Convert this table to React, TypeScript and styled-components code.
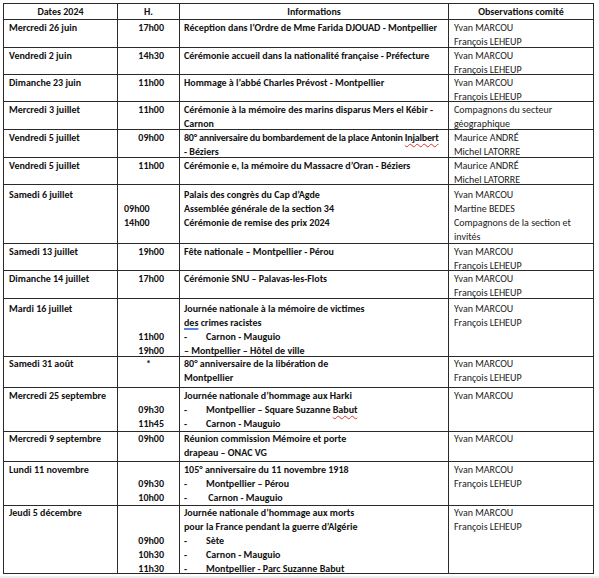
import React from "react";
import styled, { createGlobalStyle } from "styled-components";

type Line = string | React.ReactNode;

interface Entry {
  date: string;
  times: string[];
  timeAlign?: "right" | "left" | "center";
  info: Line[];
  obs: string[];
  height: number;
  padTop?: number;
}

const YM_FL = ["Yvan MARCOU", "François LEHEUP"];

const GlobalStyle = createGlobalStyle`
  html, body {
    margin: 0;
    padding: 0;
    background: #efefef;
  }
  body {
    font-family: Carlito, "Lato", "Liberation Sans", sans-serif;
    color: #111;
  }
`;

const Spell = styled.span`
  text-decoration: underline wavy #e0342c;
  text-decoration-thickness: 1px;
  text-underline-offset: 2px;
`;

const Grammar = styled.span`
  text-decoration: underline solid #5b86d8;
  text-decoration-thickness: 2px;
  text-underline-offset: 2px;
`;

// a line that runs right up to the cell border in the original document
const Tight = styled.span`
  letter-spacing: -0.2px;
`;

const Item = styled.span`
  display: inline-block;
  width: 22px;
`;

const dash = (text: React.ReactNode) => (
  <>
    <Item>-</Item>
    {text}
  </>
);

const entries: Entry[] = [
  {
    date: "Mercredi 26 juin",
    times: ["17h00"],
    info: ["Réception dans l’Ordre de Mme Farida DJOUAD - Montpellier"],
    obs: YM_FL,
    height: 28,
  },
  {
    date: "Vendredi 2 juin",
    times: ["14h30"],
    info: ["Cérémonie accueil dans la nationalité française - Préfecture"],
    obs: YM_FL,
    height: 27,
  },
  {
    date: "Dimanche 23 juin",
    times: ["11h00"],
    info: ["Hommage à l’abbé Charles Prévost - Montpellier"],
    obs: YM_FL,
    height: 27,
  },
  {
    date: "Mercredi 3 juillet",
    times: ["11h00"],
    info: ["Cérémonie à la mémoire des marins disparus Mers el Kébir -", "Carnon"],
    obs: ["Compagnons du secteur", "géographique"],
    height: 28,
  },
  {
    date: "Vendredi 5 juillet",
    times: ["09h00"],
    info: [
      <Tight>
        80° anniversaire du bombardement de la place Antonin <Spell>Injalbert</Spell>
      </Tight>,
      "- Béziers",
    ],
    obs: ["Maurice ANDRÉ", "Michel LATORRE"],
    height: 28,
  },
  {
    date: "Vendredi 5 juillet",
    times: ["11h00"],
    info: ["Cérémonie e, la mémoire du Massacre d’Oran - Béziers"],
    obs: ["Maurice ANDRÉ", "Michel LATORRE"],
    height: 27,
  },
  {
    date: "Samedi 6 juillet",
    times: ["", "09h00", "14h00"],
    timeAlign: "left",
    info: [
      "Palais des congrès du Cap d’Agde",
      "Assemblée générale de la section 34",
      "Cérémonie de remise des prix 2024",
    ],
    obs: ["Yvan MARCOU", "Martine BEDES", "Compagnons de la section et", "invités"],
    height: 59,
    padTop: 3,
  },
  {
    date: "Samedi 13 juillet",
    times: ["19h00"],
    info: ["Fête nationale – Montpellier - Pérou"],
    obs: YM_FL,
    height: 27,
  },
  {
    date: "Dimanche 14 juillet",
    times: ["17h00"],
    info: ["Cérémonie SNU – Palavas-les-Flots"],
    obs: YM_FL,
    height: 28,
  },
  {
    date: "Mardi 16 juillet",
    times: ["", "", "11h00", "19h00"],
    info: [
      "Journée nationale à la mémoire de victimes",
      <>
        <Grammar>des</Grammar> crimes racistes
      </>,
      dash("Carnon - Mauguio"),
      "– Montpellier – Hôtel de ville",
    ],
    obs: YM_FL,
    height: 58,
    padTop: 3,
  },
  {
    date: "Samedi 31 août",
    times: ["*"],
    timeAlign: "center",
    info: ["80° anniversaire de la libération de", "Montpellier"],
    obs: YM_FL,
    height: 31,
    padTop: 0,
  },
  {
    date: "Mercredi 25 septembre",
    times: ["", "09h30", "11h45"],
    info: [
      "Journée nationale d’hommage aux Harki",
      dash(
        <>
          Montpellier – Square Suzanne <Spell>Babut</Spell>
        </>
      ),
      dash("Carnon - Mauguio"),
    ],
    obs: ["Yvan MARCOU"],
    height: 44,
  },
  {
    date: "Mercredi 9 septembre",
    times: ["09h00"],
    info: ["Réunion commission Mémoire et porte", "drapeau – ONAC VG"],
    obs: ["Yvan MARCOU"],
    height: 30,
    padTop: 0,
  },
  {
    date: "Lundi 11 novembre",
    times: ["", "09h30", "10h00"],
    info: [
      "105° anniversaire du 11 novembre 1918",
      dash("Montpellier – Pérou"),
      dash(" Carnon - Mauguio"),
    ],
    obs: YM_FL,
    height: 44,
  },
  {
    date: "Jeudi 5 décembre",
    times: ["", "", "09h00", "10h30", "11h30"],
    info: [
      "Journée nationale d’hommage aux morts",
      "pour la France pendant la guerre d’Algérie",
      dash("Sète"),
      dash("Carnon - Mauguio"),
      dash(
        <>
          <Grammar>Montpellier </Grammar> - Parc Suzanne <Spell>Babut</Spell>
        </>
      ),
    ],
    obs: YM_FL,
    height: 68,
    padTop: 0,
  },
];

const App: React.FC = () => (
  <>
    <GlobalStyle />
    <Page>
      <Table>
        <Row $height={16}>
          <HeadCell>Dates 2024</HeadCell>
          <HeadCell>H.</HeadCell>
          <HeadCell>Informations</HeadCell>
          <HeadCell>Observations comité</HeadCell>
        </Row>
        {entries.map((e, i) => (
          <Row key={i} $height={e.height}>
            <DateCell $padTop={e.padTop ?? 1}>{e.date}</DateCell>
            <TimeCell $padTop={e.padTop ?? 1} $align={e.timeAlign ?? "right"}>
              {e.times.map((t, j) => (
                <TextLine key={j}>{t || "\u00a0"}</TextLine>
              ))}
            </TimeCell>
            <InfoCell $padTop={e.padTop ?? 1}>
              {e.info.map((l, j) => (
                <TextLine key={j}>{l}</TextLine>
              ))}
            </InfoCell>
            <ObsCell $padTop={e.padTop ?? 1}>
              {e.obs.map((o, j) => (
                <TextLine key={j}>{o}</TextLine>
              ))}
            </ObsCell>
          </Row>
        ))}
      </Table>
    </Page>
  </>
);

export default App;

const Page = styled.div`
  background: #fff;
  padding: 3px 0 2px 3px;
  width: 599px;
  box-sizing: border-box;
`;

const Table = styled.div`
  width: 591px;
  border-top: 1px solid #2a2a2a;
  border-left: 1px solid #2a2a2a;
  box-sizing: border-box;
  font-size: 10px;
  line-height: 14px;
`;

const Row = styled.div<{ $height: number }>`
  display: grid;
  grid-template-columns: 114px 62px 269px 145px;
  height: ${(p) => p.$height}px;
  box-sizing: border-box;
`;

const Cell = styled.div<{ $padTop?: number }>`
  border-right: 1px solid #2a2a2a;
  border-bottom: 1px solid #2a2a2a;
  box-sizing: border-box;
  padding-top: ${(p) => p.$padTop ?? 1}px;
  overflow: hidden;
  white-space: nowrap;
`;

const HeadCell = styled(Cell)`
  font-weight: 700;
  text-align: center;
`;

const DateCell = styled(Cell)`
  font-weight: 700;
  padding-left: 5px;
`;

const TimeCell = styled(Cell)<{ $align: "right" | "left" | "center" }>`
  font-weight: 700;
  text-align: ${(p) => p.$align};
  padding-left: ${(p) => (p.$align === "left" ? 6 : 0)}px;
  padding-right: ${(p) => (p.$align === "right" ? 15 : 0)}px;
`;

const InfoCell = styled(Cell)`
  font-weight: 700;
  padding-left: 4px;
`;

const ObsCell = styled(Cell)`
  padding-left: 5px;
  color: #1a1a1a;
`;

const TextLine = styled.div`
  height: 14px;
`;
